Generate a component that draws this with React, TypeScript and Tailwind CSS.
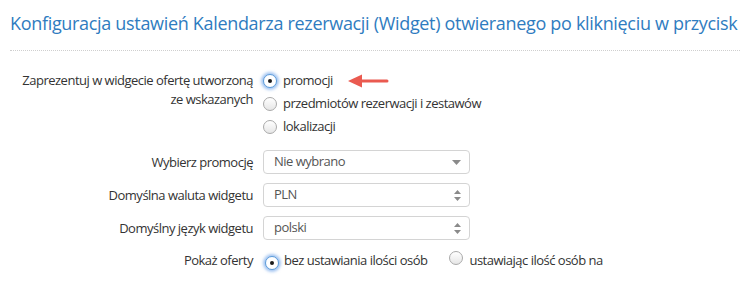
import React from 'react'

const font = { fontFamily: '"Open Sans", "DejaVu Sans", sans-serif' }

function Radio({ checked }: { checked?: boolean }) {
  if (checked) {
    return (
      <span className="relative inline-flex h-[14px] w-[14px] shrink-0 items-center justify-center rounded-full border border-[#5b9bd9] bg-white shadow-[0_0_3px_2px_rgba(88,150,230,0.55)]">
        <span className="h-[4px] w-[4px] rounded-full bg-[#1a1a1a]" />
      </span>
    )
  }
  return (
    <span className="inline-block h-[14px] w-[14px] shrink-0 rounded-full border border-[#aaaaaa] bg-gradient-to-b from-white to-[#e6e6e6]" />
  )
}

function Select({ value, caret }: { value: string; caret: 'down' | 'updown' }) {
  return (
    <div className="flex h-[24px] w-[207px] items-center justify-between rounded-[4px] border border-[#d4d4d4] bg-white pl-[10px] pr-[8px] text-[13px] tracking-[-0.5px] text-[#555]">
      <span>{value}</span>
      {caret === 'down' ? (
        <svg width="9" height="5" viewBox="0 0 9 5"><path d="M0 0h9L4.5 5z" fill="#8a8a8a" /></svg>
      ) : (
        <svg width="7" height="11" viewBox="0 0 7 11"><path d="M3.5 0L7 4H0z M0 7h7L3.5 11z" fill="#8a8a8a" /></svg>
      )}
    </div>
  )
}

function Row({ label, children, className = '' }: { label: React.ReactNode; children: React.ReactNode; className?: string }) {
  return (
    <div className={`flex ${className}`}>
      <div className="w-[255px] shrink-0 pr-[2px] text-right text-[13px] leading-[19px] tracking-[-0.5px] text-[#333]">{label}</div>
      <div className="ml-[8px]">{children}</div>
    </div>
  )
}

export default function App() {
  return (
    <div className="h-[290px] w-[752px] bg-white" style={font}>
      <div className="px-[10px] pt-[10px]">
        <h1 className="whitespace-nowrap text-[18px] leading-[26px] tracking-[-0.32px] text-[#2f7cc0]">
          Konfiguracja ustawień Kalendarza rezerwacji (Widget) otwieranego po kliknięciu w przycisk
        </h1>
        <div className="mt-[14px] w-[730px] border-t border-dotted border-[#cfcfcf]" />
      </div>

      <div className="pt-[20px]">
        <Row label={<>Zaprezentuj w widgecie ofertę utworzoną<br />ze wskazanych</>}>
          <div className="flex flex-col gap-[4px] text-[13px] leading-[19px] tracking-[-0.5px] text-[#333]">
            <div className="flex items-center gap-[6px]">
              <Radio checked />
              <span>promocji</span>
              <svg className="ml-[9px]" width="41" height="14" viewBox="0 0 41 14">
                <path d="M12 5.5h27a1.5 1.5 0 0 1 0 3H12z" fill="#ea5a50" />
                <path d="M0 7L14 0.5v13z" fill="#ea5a50" />
              </svg>
            </div>
            <div className="flex items-center gap-[6px]">
              <Radio />
              <span>przedmiotów rezerwacji i zestawów</span>
            </div>
            <div className="flex items-center gap-[6px]">
              <Radio />
              <span>lokalizacji</span>
            </div>
          </div>
        </Row>

        <Row label="Wybierz promocję" className="mt-[14px] items-center">
          <Select value="Nie wybrano" caret="down" />
        </Row>
        <Row label="Domyślna waluta widgetu" className="mt-[9px] items-center">
          <Select value="PLN" caret="updown" />
        </Row>
        <Row label="Domyślny język widgetu" className="mt-[9px] items-center">
          <Select value="polski" caret="updown" />
        </Row>

        <Row label="Pokaż oferty" className="mt-[11px] items-center">
          <div className="flex items-center text-[13px] leading-[19px] tracking-[-0.5px] text-[#333]">
            <span className="ml-[2px]"><Radio checked /></span>
            <span className="ml-[5px]">bez ustawiania ilości osób</span>
            <span className="ml-[22px]"><Radio /></span>
            <span className="ml-[6px]">ustawiając ilość osób na</span>
          </div>
        </Row>
      </div>
    </div>
  )
}
